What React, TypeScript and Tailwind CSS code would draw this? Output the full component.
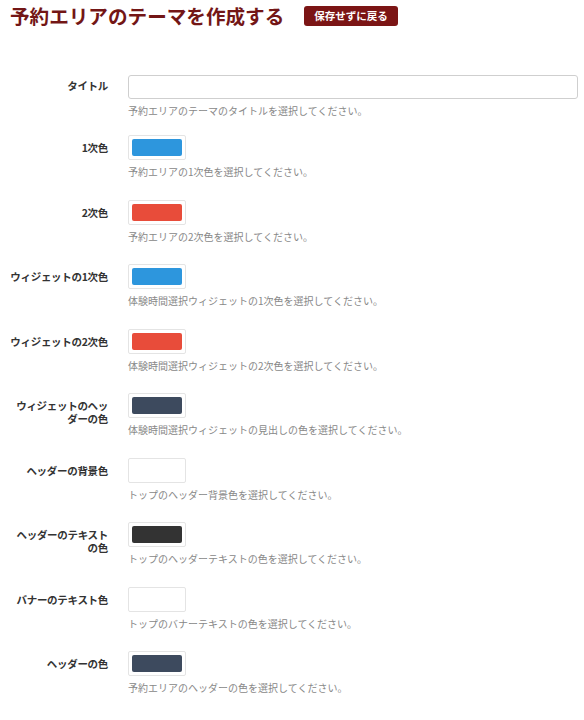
import React from "react";

type Row = {
  key: string;
  label: string;
  help: string;
  color?: string;
};

const rows: readonly Row[] = [
  { key: "primary", label: "1次色", help: "予約エリアの1次色を選択してください。", color: "#2d96dd" },
  { key: "secondary", label: "2次色", help: "予約エリアの2次色を選択してください。", color: "#e84c3a" },
  { key: "w1", label: "ウィジェットの1次色", help: "体験時間選択ウィジェットの1次色を選択してください。", color: "#2d96dd" },
  { key: "w2", label: "ウィジェットの2次色", help: "体験時間選択ウィジェットの2次色を選択してください。", color: "#e84c3a" },
  { key: "wh", label: "ウィジェットのヘッダーの色", help: "体験時間選択ウィジェットの見出しの色を選択してください。", color: "#3d4a5e" },
  { key: "hbg", label: "ヘッダーの背景色", help: "トップのヘッダー背景色を選択してください。" },
  { key: "htext", label: "ヘッダーのテキストの色", help: "トップのヘッダーテキストの色を選択してください。", color: "#333333" },
  { key: "banner", label: "バナーのテキスト色", help: "トップのバナーテキストの色を選択してください。" },
  { key: "header", label: "ヘッダーの色", help: "予約エリアのヘッダーの色を選択してください。", color: "#3d4a5e" },
];

const font = "font-['Meiryo','Noto_Sans_CJK_JP',sans-serif]";

function Label({ text }: { text: string }) {
  return (
    <div className="w-[98px] shrink-0 pt-[6px] text-right text-[10.5px] font-bold leading-[13px] text-[#333] tracking-[-0.3px]">
      {text}
    </div>
  );
}

function Help({ text }: { text: string }) {
  return <p className="mt-[5px] text-[10px] leading-[14px] text-[#888]">{text}</p>;
}

function Swatch({ color }: { color?: string }) {
  return (
    <div className="flex h-[25px] w-[58px] items-center justify-center rounded-[2px] border border-[#e4e4e4] bg-white">
      {color ? (
        <div className="h-[17px] w-[50px] rounded-[2px]" style={{ backgroundColor: color }} />
      ) : null}
    </div>
  );
}

export default function App() {
  return (
    <div className={`min-h-[720px] w-[584px] bg-white pl-[10px] pr-[6px] ${font}`}>
      <div className="flex items-center gap-[20px] pt-[3px]">
        <h1 className="text-[19.6px] font-bold leading-[26px] text-[#731616]">
          予約エリアのテーマを作成する
        </h1>
        <button className="rounded-[3px] bg-[#7b1515] px-[10px] py-[4px] text-[10.5px] font-bold leading-[12px] text-white">
          保存せずに戻る
        </button>
      </div>

      <form className="mt-[44px] flex flex-col">
        <div className="flex gap-[20px] pb-[17px]">
          <Label text="タイトル" />
          <div className="flex-1">
            <input
              type="text"
              className="h-[24px] w-full rounded-[3px] border border-[#cfcfcf] bg-white px-2 text-[11px] outline-none"
            />
            <Help text="予約エリアのテーマのタイトルを選択してください。" />
          </div>
        </div>

        {rows.map((row) => (
          <div key={row.key} className="flex gap-[20px] pb-[20.5px]">
            <Label text={row.label} />
            <div className="flex-1">
              <Swatch color={row.color} />
              <Help text={row.help} />
            </div>
          </div>
        ))}
      </form>
    </div>
  );
}
